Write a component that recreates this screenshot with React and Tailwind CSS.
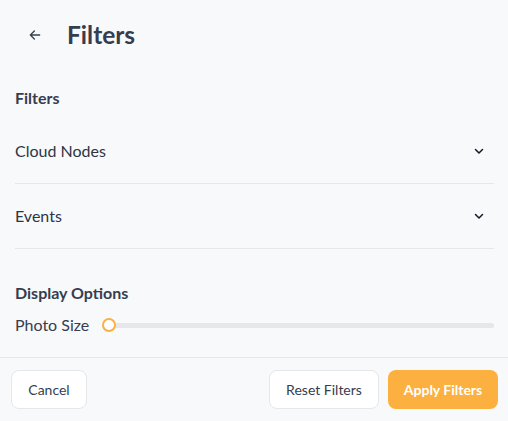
import React from "react";

function Chevron() {
  return (
    <svg width="12" height="12" viewBox="0 0 24 24" fill="none" stroke="#111827" strokeWidth="3" strokeLinecap="round" strokeLinejoin="round">
      <path d="M5 9l7 7 7-7" />
    </svg>
  );
}

function Row({ label }) {
  return (
    <div className="flex items-center justify-between h-[65px] border-b border-[#e5e7eb] pr-[9px]">
      <span className="text-[16px] text-[#2d3444]">{label}</span>
      <Chevron />
    </div>
  );
}

export default function App() {
  return (
    <div className="w-[508px] h-[421px] bg-[#f8f9fb] flex flex-col text-[#363d4f]" style={{ fontFamily: "Lato, 'Noto Sans', sans-serif" }}>
      <div className="flex items-center h-[70px] pl-[27px]">
        <svg width="16" height="16" viewBox="0 0 24 24" fill="none" stroke="#374151" strokeWidth="2" strokeLinecap="round" strokeLinejoin="round">
          <path d="M19 12H5M11 6l-6 6 6 6" />
        </svg>
        <h1 className="ml-[24px] text-[24.5px] font-bold text-[#363d4f]">Filters</h1>
      </div>

      <div className="flex-1 pl-[15px] pr-[14px] pt-[16px]">
        <div className="text-[16px] font-bold leading-[24px]">Filters</div>
        <div className="mt-[9px]">
          <Row label="Cloud Nodes" />
          <Row label="Events" />
        </div>
        <div className="mt-[32px] text-[16px] font-bold leading-[24px]">Display Options</div>
        <div className="flex items-center mt-[8px] gap-[10px]">
          <span className="text-[16px] text-[#363d4f]">Photo Size</span>
          <div className="relative flex-1 h-[5px] rounded-full bg-[#e5e7eb] ml-[10px]">
            <div className="absolute left-[-7px] top-[-5px] w-[14px] h-[14px] rounded-full bg-white border-2 border-[#fbb040]" />
          </div>
        </div>
      </div>

      <div className="h-[64px] border-t border-[#e5e7eb] flex items-center justify-between pl-[11px] pr-[10px]">
        <button className="h-[39px] w-[76px] rounded-[8px] border border-[#e5e7eb] bg-white text-[14px] text-[#363d4f]">Cancel</button>
        <div className="flex gap-[9px]">
          <button className="h-[39px] w-[110px] rounded-[8px] border border-[#e5e7eb] bg-white text-[14px] text-[#363d4f]">Reset Filters</button>
          <button className="h-[39px] w-[110px] rounded-[8px] bg-[#fbb040] text-[14px] font-bold text-white">Apply Filters</button>
        </div>
      </div>
    </div>
  );
}
